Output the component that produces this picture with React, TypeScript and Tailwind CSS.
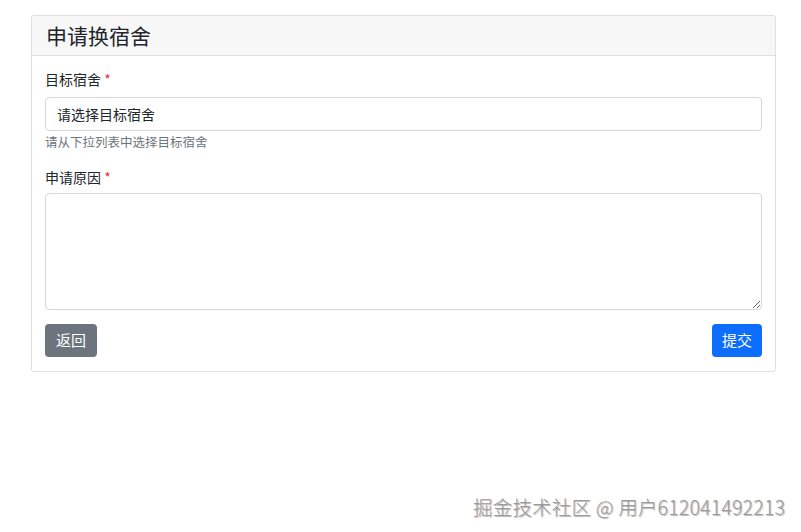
export default function App() {
    return (
        <div
            className="relative w-[801px] h-[532px] bg-white overflow-hidden"
            style={{ fontFamily: '"Noto Sans CJK SC", "Noto Sans", sans-serif' }}
        >
            <div className="pl-[31px] pt-[15px]">
                <div className="w-[745px] border border-[#dfdfdf] rounded-[3px] bg-white">
                    <div className="h-[40px] flex items-center px-[14px] bg-[#f7f7f7] border-b border-[#dfdfdf] rounded-t-[3px]">
                        <h1 className="text-[21px] text-[#212529] leading-none">申请换宿舍</h1>
                    </div>
                    <div className="px-[13px] pt-[13px] pb-[14px]">
                        <label className="block text-[14px] leading-[21px] text-[#212529] mb-[7px]">
                            目标宿舍 <span className="text-[#dc3545]">*</span>
                        </label>
                        <div className="h-[34px] border border-[#d6d6d6] rounded-[4px] flex items-center px-[11px] text-[14px] text-[#212529]">
                            请选择目标宿舍
                        </div>
                        <p className="mt-[2px] text-[12.5px] leading-[18px] text-[#6c757d]">请从下拉列表中选择目标宿舍</p>

                        <label className="block mt-[16px] text-[14px] leading-[21px] text-[#212529] mb-[5px]">
                            申请原因 <span className="text-[#dc3545]">*</span>
                        </label>
                        <textarea className="block w-full h-[117px] border border-[#d6d6d6] rounded-[4px] resize-y bg-white" />

                        <div className="mt-[14px] flex justify-between">
                            <button className="h-[33px] px-[11px] rounded-[4px] bg-[#6c757d] text-white text-[15px]">
                                返回
                            </button>
                            <button className="h-[33px] px-[10px] rounded-[4px] bg-[#0d6efd] text-white text-[15px]">
                                提交
                            </button>
                        </div>
                    </div>
                </div>
            </div>

            <div
                className="absolute left-[473px] top-[492px] text-[19.5px] font-light text-[#9a9a9a] whitespace-nowrap tracking-[0.2px]"
                style={{ textShadow: '1px 1px 1px rgba(0,0,0,0.3)' }}
            >
                掘金技术社区 @ 用户612041492213
            </div>
        </div>
    );
}
